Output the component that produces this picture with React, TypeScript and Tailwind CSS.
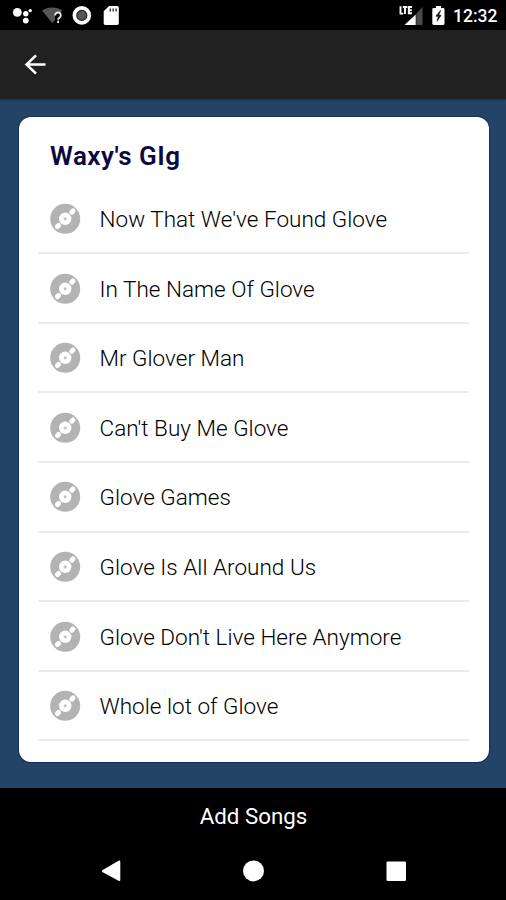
const songs = [
  "Now That We've Found Glove",
  'In The Name Of Glove',
  'Mr Glover Man',
  "Can't Buy Me Glove",
  'Glove Games',
  'Glove Is All Around Us',
  "Glove Don't Live Here Anymore",
  'Whole lot of Glove',
];

function DiscIcon() {
  return (
    <svg className="h-[31px] w-[31px] shrink-0" viewBox="0 0 31 31">
      <circle cx="15.200" cy="15.800" r="15" fill="#b3b3b3" />
      <g stroke="#fff" strokeWidth="5" strokeLinecap="round">
        <path d="M21.800 9.200 23 8" />
        <path d="M7.400 23.600 8.600 22.400" />
      </g>
      <circle cx="15.200" cy="15.800" r="6.200" fill="#fff" />
      <circle cx="15.200" cy="15.800" r="1.600" fill="#c4c4c4" />
    </svg>
  );
}

function StatusBar() {
  return (
    <div className="flex h-[30px] items-center justify-between bg-black pl-[12px] pr-[9px] text-white">
      <svg className="h-[30px] w-[110px]" viewBox="12 0 110 30">
        <g fill="#fff">
          <circle cx="17.3" cy="12.4" r="4.4" />
          <circle cx="25.8" cy="13.8" r="2.7" />
          <circle cx="30.2" cy="10.6" r="1.7" />
          <circle cx="25.8" cy="20.6" r="2.9" />
        </g>
        <path d="M42 10.5C47.5 6.6 57 6.6 62.5 10.5L60 13.5H55V20L52.3 23Z" fill="#555" />
        <path d="M55.2 15.500a2.8 2.8 0 1 1 4.6 1.9c-1 .8-1.7 1.2-1.7 2.3M58.1 20.800v2.1" fill="none" stroke="#eee" strokeWidth="1.8" />
        <circle cx="81.8" cy="15.4" r="9.3" fill="#fff" />
        <circle cx="81.8" cy="15.4" r="5" fill="#555" stroke="#222" strokeWidth="1.2" />
        <path d="M109 6h8.2q1.6 0 1.6 1.6v15.6q0 1.7-1.6 1.7h-12q-1.5 0-1.5-1.7V11.3Z" fill="#fff" />
        <path d="M110.3 8.6v3M113.2 8.6v3M116.1 8.6v3" stroke="#222" strokeWidth="1.3" />
      </svg>
      <div className="flex items-center">
        <svg className="h-[30px] w-[50px]" viewBox="398 0 50 30">
          <path d="M400.500 6.3v7.3h2.800M402.8 7h4.5M405 7v7M412 7h-3.2v6.3h3.2M408.8 10.2h3" fill="none" stroke="#fff" strokeWidth="1.900" />
          <path d="M404.5 25 415.7 14.5V25Z" fill="#fff" />
          <path d="M416.3 13.5 422.5 7V25h-6.2Z" fill="#4a4a4a" />
          <path d="M436 6h5v2h2.2q1.3 0 1.3 1.3v14.2q0 1.4-1.3 1.4h-9.6q-1.3 0-1.3-1.4V9.3Q432.3 8 433.600 8H436Z" fill="#fff" />
          <path d="m440.500 10.500-4.600 5.700h2.500l-1.300 5 4-6h-2.400Z" fill="#111" stroke="#111" strokeWidth=".7" />
        </svg>
        <span className="ml-[5px] w-[44px] whitespace-nowrap pt-[2px] text-[17.500px] font-medium leading-[30px]">12:32</span>
      </div>
    </div>
  );
}

export default function App() {
  return (
    <div className="flex h-[900px] w-[506px] flex-col overflow-hidden bg-[#234466] font-['Roboto',sans-serif]">
      <StatusBar />
      <header className="flex h-[69px] shrink-0 items-center bg-[#212121] pl-[24px] shadow-[0_1px_2px_#172e45]">
        <svg className="h-[22px] w-[23px]" viewBox="0 0 23 22" fill="none" stroke="#fff" strokeWidth="2.500">
          <path d="M21.500 10.500H3M12 1.300 2.500 10.500 12 19.700" />
        </svg>
      </header>
      <main className="h-[689px] shrink-0 pl-[18.500px] pr-[17.500px] pt-[18px]">
        <section className="h-[644.500px] rounded-[12px] bg-white px-[19.500px] pt-[19px] shadow-[0_0_1px_1px_#12345c,0_1px_0_#000850]">
          <h1 className="h-[48.700px] pl-[12px] text-[26px] font-semibold leading-[40px] tracking-[0.480px] text-[#0b0a3e]">Waxy's GIg</h1>
          <ul>
            {songs.map((song) => (
              <li key={song} className="flex h-[69.600px] items-center border-b-2 border-[#ebebeb] pl-[12px]">
                <DiscIcon />
                <span className="ml-[18.500px] whitespace-nowrap pt-[1px] text-[22.500px] font-light leading-[30px] tracking-[0.020px] text-black">{song}</span>
              </li>
            ))}
          </ul>
        </section>
      </main>
      <footer className="flex h-[112px] shrink-0 flex-col bg-black text-white">
        <button className="h-[56px] pl-px text-[22.300px] leading-[54px]">Add Songs</button>
        <nav className="flex h-[54px] items-center justify-center">
          <svg className="h-[54px] w-[310px]" viewBox="98 844 310 54" fill="#fff">
            <path d="M102.300 870.300 118.500 860.800q1.800-.8 1.800 1v18q0 1.800-1.800 1L102.300 872q-1-.8 0-1.700Z" />
            <circle cx="253.500" cy="870.900" r="10.500" />
            <rect x="386.500" y="861.500" width="19.500" height="19.500" rx="1.200" />
          </svg>
        </nav>
      </footer>
    </div>
  );
}
